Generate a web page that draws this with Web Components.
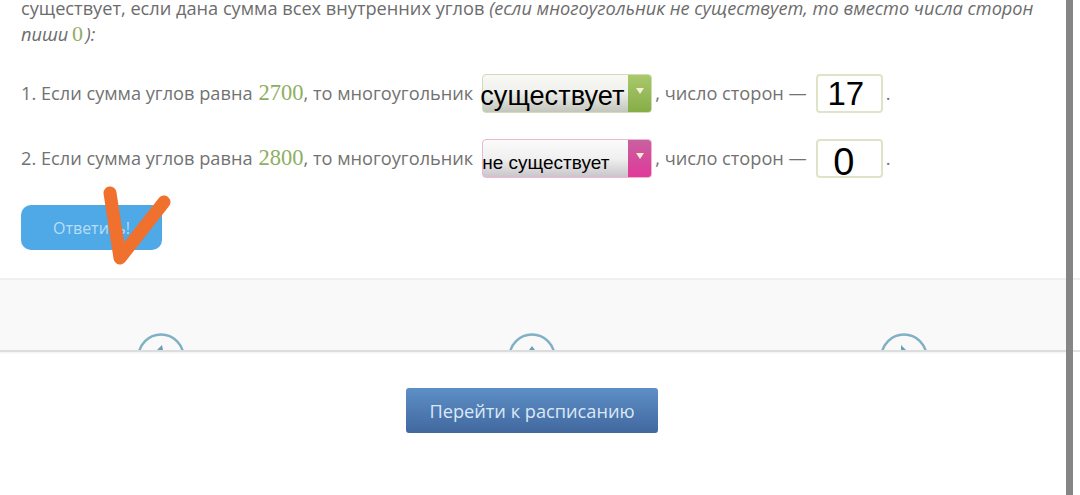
<!DOCTYPE html>
<html lang="ru">
<head>
<meta charset="utf-8">
<title>Многоугольник</title>
<style>
    html, body { margin: 0; height: 495px; overflow: hidden; background: #fff; }
    body { font-family: 'Open Sans', 'Noto Sans', sans-serif; color: #6f6f6f; }
</style>
</head>
<body>
<task-page>
    <task-intro>
        существует, если дана сумма всех внутренних углов <i>(если многоугольник не существует, то вместо числа сторон пиши <math-num>0</math-num>):</i>
    </task-intro>
    <task-row number="1" sum="2700" state="ok" choice="существует" value="17"></task-row>
    <task-row number="2" sum="2800" state="bad" choice="не существует" value="0"></task-row>
    <answer-button>Ответить!</answer-button>
    <nav-strip></nav-strip>
    <schedule-button>Перейти к расписанию</schedule-button>
</task-page>

<script>
class TaskPage extends HTMLElement {
    constructor() {
        super();
        this.attachShadow({ mode: 'open' });
        this.shadowRoot.innerHTML = `
            <style>
                :host { display: flex; height: 495px; position: relative; overflow: hidden; }
                .main { width: 1066px; flex-shrink: 0; display: flex; flex-direction: column; }
                .edge { width: 7px; flex-shrink: 0; background: #858585; }
                .rest { flex: 1; background:
                    linear-gradient(#f0f0f0, #f0f0f0) 0 278px / 100% 2px no-repeat,
                    linear-gradient(#e2e2e2, #e2e2e2) 0 350px / 100% 2px no-repeat,
                    #fff; }
                .mark { position: absolute; left: 100px; top: 185px; }
            </style>
            <div class="main"><slot></slot></div>
            <div class="edge"></div>
            <div class="rest"></div>
            <svg class="mark" width="75" height="85" viewBox="0 0 75 85">
                <path d="M10 8 L20 73 L64 17" fill="none" stroke="#f0702e" stroke-width="13" stroke-linecap="round" stroke-linejoin="round"/>
            </svg>
        `;
    }
}

class TaskIntro extends HTMLElement {
    constructor() {
        super();
        this.attachShadow({ mode: 'open' });
        this.shadowRoot.innerHTML = `
            <style>
                :host { display: block; padding: 0 21px; margin-top: -4px; margin-bottom: 26px; font-size: 18.2px; line-height: 25px; color: #6c6c6c; }
            </style>
            <slot></slot>
        `;
    }
}

class MathNum extends HTMLElement {
    constructor() {
        super();
        this.attachShadow({ mode: 'open' });
        this.shadowRoot.innerHTML = `
            <style>
                :host { display: inline; margin: 0 -3px 0 -1px; font-family: 'Liberation Serif', serif; font-style: normal; font-size: 22px; color: #8fae63; }
            </style>
            <slot></slot>
        `;
    }
}

class TaskRow extends HTMLElement {
    constructor() {
        super();
        this.attachShadow({ mode: 'open' });
    }

    connectedCallback() {
        const number = this.getAttribute('number');
        const sum = this.getAttribute('sum');
        const state = this.getAttribute('state');
        const choice = this.getAttribute('choice');
        const value = this.getAttribute('value');
        this.shadowRoot.innerHTML = `
            <style>
                :host { display: flex; align-items: center; height: 40px; margin-bottom: 25px; padding-left: 21px; font-size: 18.2px; color: #727272; white-space: nowrap; }
                .sum { font-family: 'Liberation Serif', serif; font-size: 22.5px; color: #8fae63; margin-left: 6px; }
                .after { margin-right: 9px; }
                .tail { margin-left: 3px; }
                .end { margin-left: 3px; }
            </style>
            <span>${number}. Если сумма углов равна</span>
            <span class="sum">${sum}</span><span class="after">, то многоугольник</span>
            <pick-box state="${state}">${choice}</pick-box>
            <span class="tail">, число сторон —</span>
            <number-box state="${state}">${value}</number-box>
            <span class="end">.</span>
        `;
    }
}

class PickBox extends HTMLElement {
    constructor() {
        super();
        this.attachShadow({ mode: 'open' });
        this.shadowRoot.innerHTML = `
            <style>
                :host { display: flex; width: 170px; height: 39px; box-sizing: border-box; border: 1px solid #cfdcb8; border-radius: 4px; background: linear-gradient(#f8f8f4, #f0f0ec 45%, #c3c6bb); color: #000; }
                :host([state="bad"]) { border-color: #eeb6d3; background: linear-gradient(#fbfbfb, #f0f0f0 50%, #c9c5ca); }
                .label { flex: 1; min-width: 0; align-self: center; font-family: 'Liberation Sans', sans-serif; font-size: 27.2px; line-height: 30px; margin-left: -3px; margin-top: 5px; white-space: nowrap; }
                :host([state="bad"]) .label { font-size: 19px; margin-left: -1px; margin-top: 10px; }
                .arrow { width: 23px; flex-shrink: 0; display: flex; justify-content: center; padding-top: 13px; box-sizing: border-box; border-radius: 0 3px 3px 0; background: linear-gradient(#a9c96b, #86ad48); }
                :host([state="bad"]) .arrow { background: linear-gradient(#c9609f, #e0399a); }
                svg { display: block; }
            </style>
            <span class="label"><slot></slot></span>
            <span class="arrow"><svg width="8" height="6" viewBox="0 0 8 6"><path d="M0 0H8L4 6Z" fill="#f4efd8"/></svg></span>
        `;
    }
}

class NumberBox extends HTMLElement {
    constructor() {
        super();
        this.attachShadow({ mode: 'open' });
        this.shadowRoot.innerHTML = `
            <style>
                :host { display: flex; align-items: center; justify-content: center; width: 67px; height: 39px; margin-left: 9px; padding-right: 7px; box-sizing: border-box; border: 2px solid #dde4c8; border-radius: 4px; background: #fff; color: #000; font-family: 'Liberation Sans', sans-serif; font-size: 33px; line-height: 1; }
                :host([state="bad"]) { font-size: 38px; padding-top: 7px; padding-right: 11px; }
            </style>
            <slot></slot>
        `;
    }
}

class AnswerButton extends HTMLElement {
    constructor() {
        super();
        this.attachShadow({ mode: 'open' });
        this.shadowRoot.innerHTML = `
            <style>
                :host { display: flex; align-items: center; justify-content: center; align-self: flex-start; width: 141px; height: 45px; margin: 2px 0 28px 21px; border-radius: 10px; background: #4fa9e6; color: #b7def8; font-size: 16px; }
            </style>
            <slot></slot>
        `;
    }
}

class NavStrip extends HTMLElement {
    constructor() {
        super();
        this.attachShadow({ mode: 'open' });
        const icon = (d) => `
            <svg width="48" height="17" viewBox="0 0 48 17">
                <circle cx="24" cy="24" r="22.5" fill="none" stroke="#7fb0c4" stroke-width="2.5"/>
                <path d="${d}" fill="#6d9fb6"/>
            </svg>`;
        this.shadowRoot.innerHTML = `
            <style>
                :host { display: grid; grid-template-columns: repeat(3, 371.5px); justify-content: center; justify-items: center; align-items: end; height: 74px; padding-right: 2px; box-sizing: border-box; background: #f9f9f9; border-top: 2px solid #efefef; border-bottom: 2px solid #dddddd; box-shadow: 0 1px 2px rgba(0,0,0,.06); overflow: hidden; }
                svg { display: block; }
            </style>
            <span>${icon('M25 12L20 17H26Z')}</span>
            <span>${icon('M24 13L21 17H27Z')}</span>
            <span>${icon('M21 12L26 17H21Z')}</span>
        `;
    }
}

class ScheduleButton extends HTMLElement {
    constructor() {
        super();
        this.attachShadow({ mode: 'open' });
        this.shadowRoot.innerHTML = `
            <style>
                :host { display: flex; align-items: center; justify-content: center; align-self: flex-start; width: 252px; height: 45px; margin: 36px 0 0 406px; border-radius: 3px; background: linear-gradient(#5d8fc6, #41689f); color: #dce8f5; font-size: 18.2px; }
            </style>
            <slot></slot>
        `;
    }
}

customElements.define('task-page', TaskPage);
customElements.define('task-intro', TaskIntro);
customElements.define('math-num', MathNum);
customElements.define('task-row', TaskRow);
customElements.define('pick-box', PickBox);
customElements.define('number-box', NumberBox);
customElements.define('answer-button', AnswerButton);
customElements.define('nav-strip', NavStrip);
customElements.define('schedule-button', ScheduleButton);
</script>
</body>
</html>
